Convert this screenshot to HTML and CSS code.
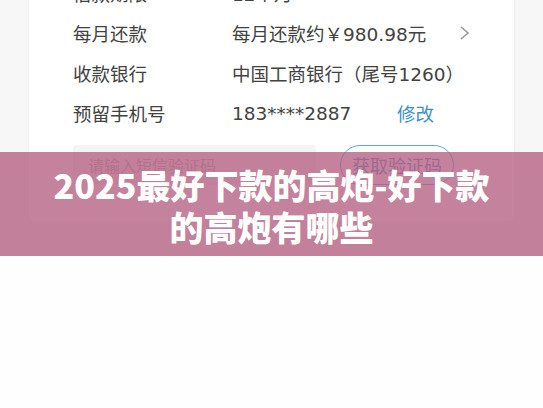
FILE: index.html
```html
<!DOCTYPE html>
<html lang="zh-CN">
<head>
  <meta charset="UTF-8" />
  <meta name="viewport" content="width=device-width, initial-scale=1.0" />
  <title>2025最好下款的高炮-好下款的高炮有哪些</title>
  <link rel="stylesheet" href="styles.css">
</head>
<body>
  <div class="cover">
    <div class="card">
      <div class="row">
        <span class="label">借款期限</span>
        <span class="value">12个月</span>
      </div>
      <div class="row">
        <span class="label">每月还款</span>
        <span class="value">每月还款约￥980.98元</span>
        <svg class="chevron" width="12" height="14" viewBox="0 0 12 14">
          <polyline points="2,1 9,7 2,13" fill="none" stroke="#9a9a9a" stroke-width="1.6" />
        </svg>
      </div>
      <div class="row">
        <span class="label">收款银行</span>
        <span class="value">中国工商银行（尾号1260）</span>
      </div>
      <div class="row">
        <span class="label">预留手机号</span>
        <span class="value phone">183****2887</span>
        <span class="edit">修改</span>
      </div>

      <div class="code-row">
        <div class="code-input">请输入短信验证码</div>
        <div class="code-btn">获取验证码</div>
      </div>
    </div>

    <div class="banner">
      <h1>2025最好下款的高炮-好下款<br>的高炮有哪些</h1>
    </div>
  </div>
</body>
</html>
```

FILE: styles.css
```css
body {
  margin: 0;
  padding: 0;
  background: #fefefe;
  font-family: "Noto Sans CJK SC", "Noto Sans", sans-serif;
  color: #424242;
}

.cover {
  position: relative;
  height: 256px;
  background: #f7f7f7;
  overflow: hidden;
}

.card {
  margin: -30px 29px 0 29px;
  padding: 3px 0 36px 44px;
  background: #fff;
  border-radius: 0 0 6px 6px;
  box-shadow: 0 0 4px rgba(0,0,0,0.04);
}

.row {
  display: flex;
  align-items: center;
  height: 40px;
  font-size: 18.5px;
}

.label {
  width: 159px;
  flex-shrink: 0;
}

.value {
  font-family: "DejaVu Sans", "Noto Sans CJK SC", sans-serif;
  color: #424242;
}

.phone {
  width: 165px;
}

.chevron {
  margin-left: 33px;
}

.edit {
  color: #3d8fc9;
}

.code-row {
  display: flex;
  align-items: center;
  gap: 24px;
  margin-top: 12px;
}

.code-input {
  width: 228px;
  height: 40px;
  line-height: 40px;
  padding-left: 15px;
  background: #f5f5f5;
  border-radius: 3px;
  color: #b0b0b0;
  font-size: 16px;
}

.code-btn {
  width: 112px;
  height: 38px;
  line-height: 38px;
  text-align: center;
  border: 1.5px solid #5aaad9;
  border-radius: 20px;
  color: #4a8ec4;
  font-size: 18px;
}

.banner {
  position: absolute;
  left: 0;
  right: 0;
  top: 152px;
  height: 104px;
  background: rgba(180, 95, 130, 0.78);
  text-align: center;
}

.banner h1 {
  margin: 12px 0 0;
  font-size: 34px;
  line-height: 42px;
  font-weight: 900;
  color: #fff;
}
```
